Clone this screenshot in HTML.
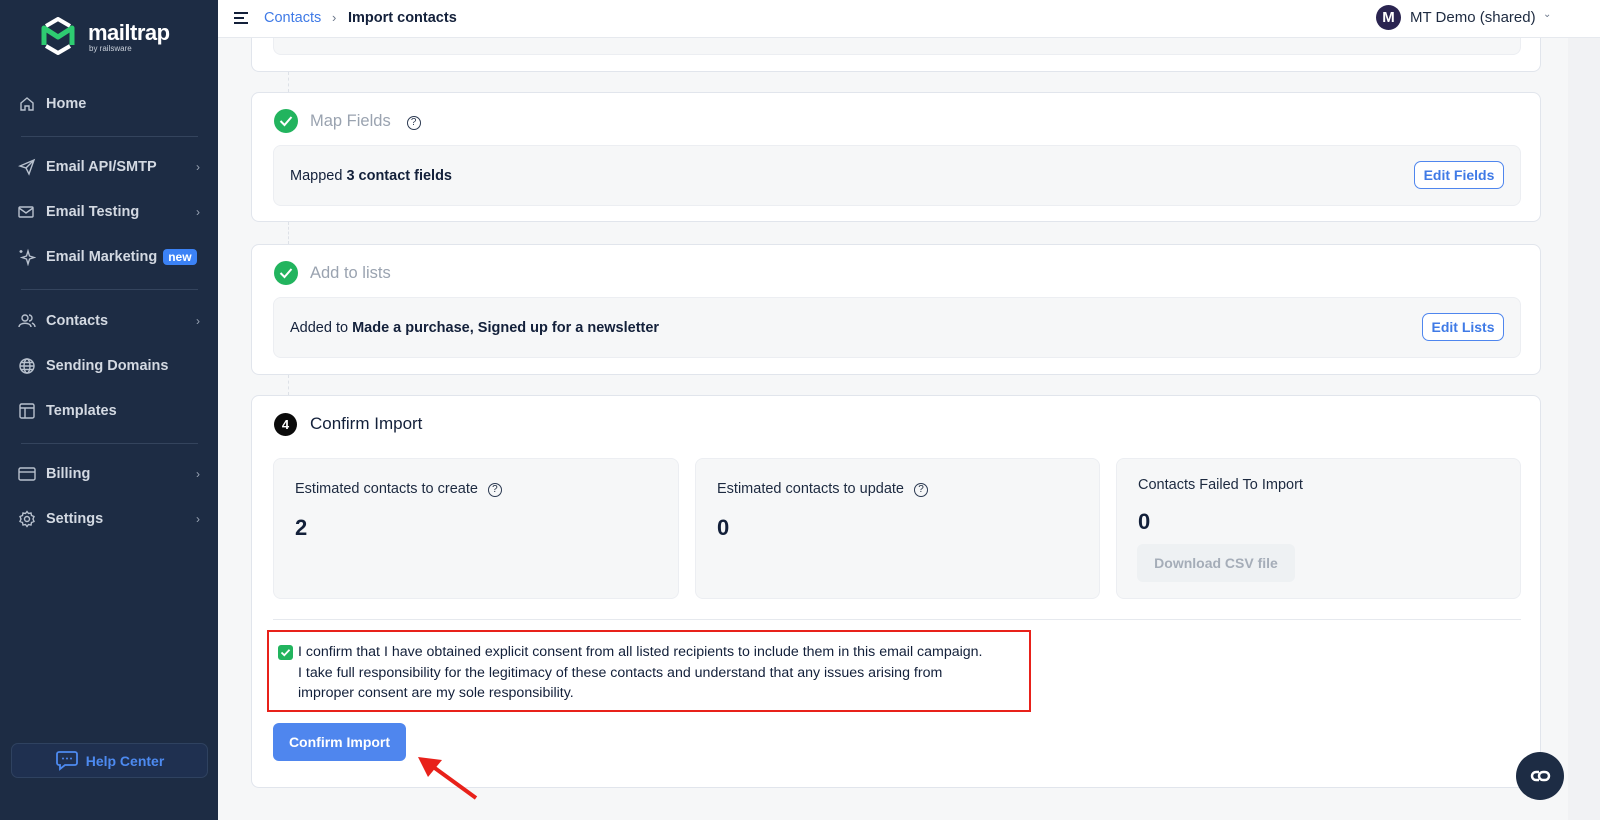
<!DOCTYPE html>
<html><head><meta charset="utf-8"><style>
*{box-sizing:border-box;margin:0;padding:0}
body{width:1600px;height:820px;overflow:hidden;background:#f6f7f8;font-family:"Liberation Sans",sans-serif;color:#13203a;position:relative}
.a{position:absolute}
#sb{left:0;top:0;width:218px;height:820px;background:#1d2c44}
.ni{position:absolute;left:18px;height:20px;display:flex;align-items:center;color:#d3d9e2;font-size:14.5px;font-weight:bold;width:182px;white-space:nowrap}
.ni svg{width:18px;height:18px;margin-right:10px;stroke:#b8c1ce;fill:none;stroke-width:1.4;flex:none}
.ni .ch{position:absolute;right:0;color:#9aa5b5;font-size:12px;font-weight:normal}
.dv{position:absolute;left:21px;width:177px;height:1px;background:#34445d}
.card{position:absolute;left:251px;width:1290px;background:#fff;border:1px solid #e1e5ec;border-radius:8px}
.in{position:absolute;left:273px;width:1248px;background:#f6f7f8;border:1px solid #eceef2;border-radius:8px}
.btn{position:absolute;border:1.5px solid #4f86ee;border-radius:7px;color:#3f7ae6;font-weight:bold;font-size:14px;background:#fff;display:flex;align-items:center;justify-content:center}
.st{position:absolute;top:458px;height:141px;background:#f6f7f8;border:1px solid #eceef2;border-radius:8px}
.st .l{position:absolute;left:21px;top:22px;font-size:14.5px;color:#1d2a40}
.st .n{position:absolute;left:21px;top:56px;font-size:22px;font-weight:bold;color:#13203a}
.q{display:inline-block;width:14px;height:14px;border:1.3px solid #2c3a52;border-radius:50%;font-size:10px;text-align:center;line-height:12px;margin-left:10px;vertical-align:1px}
.chk{position:absolute;width:24px;height:24px;border-radius:50%;background:#22b45e}
.dash{position:absolute;left:288px;width:0;border-left:1.5px dashed #dde1e7}
</style></head><body>
<div class="a" id="sb">
 <svg class="a" style="left:41px;top:17px" width="34" height="38" viewBox="0 0 34 38"><path d="M5 9 L17 2 L29 9" stroke="#fff" stroke-width="4" fill="none" stroke-linejoin="round"/><path d="M5 29 L17 36 L29 29" stroke="#fff" stroke-width="4" fill="none" stroke-linejoin="round"/><path d="M3 28 V11 L17 20 L31 11 V28" stroke="#2ecc71" stroke-width="5" fill="none" stroke-linejoin="round"/></svg>
 <div class="a" style="left:88px;top:20px;color:#fff;font-size:22px;font-weight:bold;letter-spacing:-0.5px">mailtrap</div>
 <div class="a" style="left:89px;top:44px;color:#c9d0da;font-size:8px">by railsware</div>
 <div class="ni" style="top:94px"><svg viewBox="0 0 18 18"><path d="M3 8 L9 3 L15 8 V15 H11 V11 H7 V15 H3Z"/></svg>Home</div>
 <div class="dv" style="top:136px"></div>
 <div class="ni" style="top:157px"><svg viewBox="0 0 18 18"><path d="M2 8 L16 2 L11 16 L8 10Z M8 10 L16 2"/></svg>Email API/SMTP<span class="ch">›</span></div>
 <div class="ni" style="top:202px"><svg viewBox="0 0 18 18"><rect x="1" y="4" width="14" height="10" rx="1"/><path d="M1 5 L8 10 L15 5"/></svg>Email Testing<span class="ch">›</span></div>
 <div class="ni" style="top:247px"><svg viewBox="0 0 18 18"><path d="M10 3 L11.5 8 L16 9.5 L11.5 11 L10 16 L8.5 11 L4 9.5 L8.5 8Z M3 2 V5 M1.5 3.5 H4.5"/></svg>Email Marketing<span style="margin-left:6px;background:#3b82f6;color:#fff;font-size:12px;padding:1px 5px;border-radius:4px">new</span></div>
 <div class="dv" style="top:289px"></div>
 <div class="ni" style="top:311px"><svg viewBox="0 0 18 18"><circle cx="7" cy="6" r="3"/><path d="M1 15 C1 10 13 10 13 15 M11 3 A3 3 0 0 1 11 9 M14 11 C16 12 17 13 17 15"/></svg>Contacts<span class="ch">›</span></div>
 <div class="ni" style="top:356px"><svg viewBox="0 0 18 18"><circle cx="9" cy="9" r="7"/><ellipse cx="9" cy="9" rx="3" ry="7"/><path d="M2 9 H16 M3 5.5 H15 M3 12.5 H15"/></svg>Sending Domains</div>
 <div class="ni" style="top:401px"><svg viewBox="0 0 18 18"><rect x="2" y="2" width="14" height="14" rx="1.5"/><path d="M2 6 H16 M7 6 V16"/></svg>Templates</div>
 <div class="dv" style="top:443px"></div>
 <div class="ni" style="top:464px"><svg viewBox="0 0 18 18"><rect x="1" y="3" width="16" height="12" rx="1.5"/><path d="M1 7 H17"/></svg>Billing<span class="ch">›</span></div>
 <div class="ni" style="top:509px"><svg viewBox="0 0 18 18"><circle cx="9" cy="9" r="2.5"/><path d="M9 1.5 L10.5 3.5 L13 3 L13.5 5.5 L16 6.5 L15 9 L16 11.5 L13.5 12.5 L13 15 L10.5 14.5 L9 16.5 L7.5 14.5 L5 15 L4.5 12.5 L2 11.5 L3 9 L2 6.5 L4.5 5.5 L5 3 L7.5 3.5Z"/></svg>Settings<span class="ch">›</span></div>
 <div class="a" style="left:11px;top:743px;width:197px;height:35px;border:1px solid #2f4260;background:#1f3050;border-radius:7px;display:flex;align-items:center;justify-content:center;color:#4d8af0;font-weight:bold;font-size:14px"><svg width="24" height="22" viewBox="0 0 24 22" style="margin-right:7px"><path d="M4 2 H20 A2 2 0 0 1 22 4 V13 A2 2 0 0 1 20 15 H10 L5 19 V15 H4 A2 2 0 0 1 2 13 V4 A2 2 0 0 1 4 2Z" fill="none" stroke="#4d8af0" stroke-width="1.8"/><circle cx="8" cy="8.5" r="1" fill="#4d8af0"/><circle cx="12" cy="8.5" r="1" fill="#4d8af0"/><circle cx="16" cy="8.5" r="1" fill="#4d8af0"/></svg>Help Center</div>
</div>
<div class="a" style="left:218px;top:0;width:1382px;height:38px;background:#fff;border-bottom:1px solid #e6e9ee"></div>
<svg class="a" style="left:233px;top:11px" width="17" height="14"><path d="M1 2 H15 M1 7 H11 M1 12 H15" stroke="#13203a" stroke-width="2"/></svg>
<div class="a" style="left:264px;top:10px;font-size:14.5px;color:#3f7ae6">Contacts</div>
<div class="a" style="left:332px;top:10px;font-size:13px;color:#6b778a">›</div>
<div class="a" style="left:348px;top:10px;font-size:14.5px;font-weight:bold">Import contacts</div>
<div class="a" style="left:1376px;top:5px;width:25px;height:25px;border-radius:50%;background:#2a2450;color:#fff;font-weight:bold;font-size:15px;text-align:center;line-height:25px">M</div>
<div class="a" style="left:1410px;top:9px;font-size:15px;color:#1d2a40">MT Demo (shared)</div>
<div class="a" style="left:1543px;top:9px;font-size:10px;color:#6b778a">⌄</div>

<div class="card" style="top:0;height:72px;border-top:none;border-radius:0 0 8px 8px;z-index:-1"></div>
<div class="in" style="top:0;height:55px;border-top:none;border-radius:0 0 8px 8px;z-index:-1"></div>
<div class="dash" style="top:72px;height:20px"></div>

<div class="card" style="top:92px;height:130px"></div>
<div class="chk" style="left:274px;top:109px"><svg width="24" height="24"><path d="M6.5 12 L10.5 16 L17.5 8" stroke="#fff" stroke-width="2" fill="none"/></svg></div>
<div class="a" style="left:310px;top:112px;font-size:16.5px;color:#9aa3b0">Map Fields<span class="q" style="color:#2c3a52;margin-left:16px">?</span></div>
<div class="in" style="top:145px;height:61px"></div>
<div class="a" style="left:290px;top:168px;font-size:14.5px">Mapped <b>3 contact fields</b></div>
<div class="btn" style="left:1414px;top:161px;width:90px;height:28px">Edit Fields</div>
<div class="dash" style="top:222px;height:22px"></div>

<div class="card" style="top:244px;height:131px"></div>
<div class="chk" style="left:274px;top:261px"><svg width="24" height="24"><path d="M6.5 12 L10.5 16 L17.5 8" stroke="#fff" stroke-width="2" fill="none"/></svg></div>
<div class="a" style="left:310px;top:264px;font-size:16.5px;color:#9aa3b0">Add to lists</div>
<div class="in" style="top:297px;height:61px"></div>
<div class="a" style="left:290px;top:320px;font-size:14.5px">Added to <b>Made a purchase, Signed up for a newsletter</b></div>
<div class="btn" style="left:1422px;top:313px;width:82px;height:28px">Edit Lists</div>
<div class="dash" style="top:375px;height:20px"></div>

<div class="card" style="top:395px;height:393px"></div>
<div class="a" style="left:274px;top:413px;width:23px;height:23px;border-radius:50%;background:#0b0b0b;color:#fff;font-weight:bold;font-size:13px;text-align:center;line-height:23px">4</div>
<div class="a" style="left:310px;top:414px;font-size:17px;color:#13203a">Confirm Import</div>
<div class="st" style="left:273px;width:406px"><div class="l">Estimated contacts to create<span class="q">?</span></div><div class="n">2</div></div>
<div class="st" style="left:695px;width:405px"><div class="l">Estimated contacts to update<span class="q">?</span></div><div class="n">0</div></div>
<div class="st" style="left:1116px;width:405px"><div class="l" style="top:18px">Contacts Failed To Import</div><div class="n" style="top:50px">0</div>
 <div class="a" style="left:20px;top:85px;width:158px;height:38px;background:#eef1f3;border-radius:6px;color:#a5adb8;font-weight:bold;font-size:14px;text-align:center;line-height:38px">Download CSV file</div></div>
<div class="a" style="left:273px;top:619px;width:1248px;height:1px;background:#e6e9ee"></div>
<div class="a" style="left:267px;top:630px;width:764px;height:82px;border:2px solid #e8211a"></div>
<div class="a" style="left:278px;top:645px;width:15px;height:15px;border-radius:3px;background:#22b45e"><svg width="15" height="15"><path d="M3.5 7.5 L6.3 10.2 L11.5 4.8" stroke="#fff" stroke-width="1.8" fill="none"/></svg></div>
<div class="a" style="left:298px;top:642px;font-size:14.2px;line-height:20.5px;color:#13203a;width:730px">I confirm that I have obtained explicit consent from all listed recipients to include them in this email campaign.<br>I take full responsibility for the legitimacy of these contacts and understand that any issues arising from<br>improper consent are my sole responsibility.</div>
<div class="a" style="left:273px;top:723px;width:133px;height:38px;background:#4f86ee;border-radius:6px;color:#fff;font-weight:bold;font-size:14px;text-align:center;line-height:38px">Confirm Import</div>
<svg class="a" style="left:410px;top:752px" width="80" height="60"><path d="M66 46 L22 14" stroke="#e8211a" stroke-width="4"/><path d="M8 5 L32 8 L18 25Z" fill="#e8211a"/></svg>
<div class="a" style="left:1568px;top:38px;width:32px;height:782px;background:#f1f2f4"></div>
<div class="a" style="left:1516px;top:752px;width:48px;height:48px;border-radius:50%;background:#1d2c44"><svg width="48" height="48"><path d="M23 20 H20 A4 4 0 0 0 20 28 H23" stroke="#fff" stroke-width="2.5" fill="none"/><rect x="23" y="20" width="10" height="8" rx="4" stroke="#fff" stroke-width="2.5" fill="none"/></svg></div>
</body></html>
